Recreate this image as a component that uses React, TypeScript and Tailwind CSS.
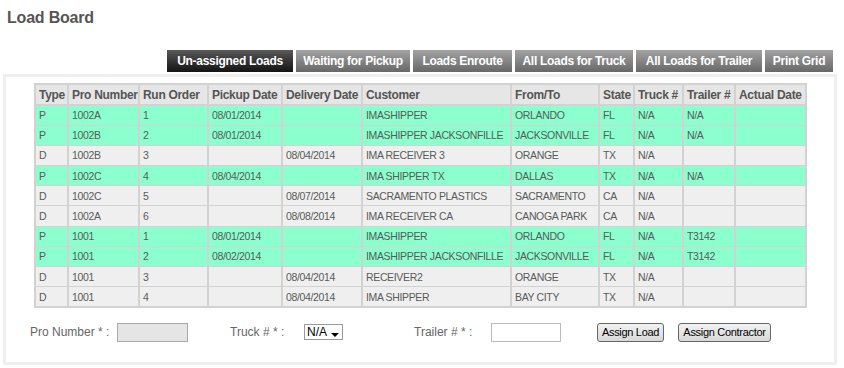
const cols = [
  { label: "Type", w: "w-[33px]" },
  { label: "Pro Number", w: "w-[71px]" },
  { label: "Run Order", w: "w-[69px]" },
  { label: "Pickup Date", w: "w-[74px]" },
  { label: "Delivery Date", w: "w-[80px]" },
  { label: "Customer", w: "w-[149px]" },
  { label: "From/To", w: "w-[88px]" },
  { label: "State", w: "w-[35px]" },
  { label: "Truck #", w: "w-[49px]" },
  { label: "Trailer #", w: "w-[52px]" },
  { label: "Actual Date", w: "w-[71px]" },
];

// P = pickup rows (green), D = delivery rows (gray)
const rows = [
  ["P", "1002A", "1", "08/01/2014", "", "IMASHIPPER", "ORLANDO", "FL", "N/A", "N/A", ""],
  ["P", "1002B", "2", "08/01/2014", "", "IMASHIPPER JACKSONFILLE", "JACKSONVILLE", "FL", "N/A", "N/A", ""],
  ["D", "1002B", "3", "", "08/04/2014", "IMA RECEIVER 3", "ORANGE", "TX", "N/A", "", ""],
  ["P", "1002C", "4", "08/04/2014", "", "IMA SHIPPER TX", "DALLAS", "TX", "N/A", "N/A", ""],
  ["D", "1002C", "5", "", "08/07/2014", "SACRAMENTO PLASTICS", "SACRAMENTO", "CA", "N/A", "", ""],
  ["D", "1002A", "6", "", "08/08/2014", "IMA RECEIVER CA", "CANOGA PARK", "CA", "N/A", "", ""],
  ["P", "1001", "1", "08/01/2014", "", "IMASHIPPER", "ORLANDO", "FL", "N/A", "T3142", ""],
  ["P", "1001", "2", "08/02/2014", "", "IMASHIPPER JACKSONFILLE", "JACKSONVILLE", "FL", "N/A", "T3142", ""],
  ["D", "1001", "3", "", "08/04/2014", "RECEIVER2", "ORANGE", "TX", "N/A", "", ""],
  ["D", "1001", "4", "", "08/04/2014", "IMA SHIPPER", "BAY CITY", "TX", "N/A", "", ""],
];

const tabs = [
  { label: "Un-assigned Loads", active: true, w: "w-[126px]" },
  { label: "Waiting for Pickup", w: "w-[114px]" },
  { label: "Loads Enroute", w: "w-[99px]" },
  { label: "All Loads for Truck", w: "w-[118px]" },
  { label: "All Loads for Trailer", w: "w-[126px]" },
  { label: "Print Grid", w: "w-[68px]" },
];

export default function App() {
  return (
    <div className="w-[844px] h-[368px] bg-white font-['Liberation_Sans',Arial,sans-serif] text-[#555]">
      <h1 className="pl-[7px] pt-[8px] text-[16px] font-bold leading-[19px] text-[#555] tracking-[-0.2px]">Load Board</h1>

      {/* Tabs */}
      <div className="flex justify-end gap-[3px] pr-[11px] mt-[23px]">
        {tabs.map((t) => (
          <div
            key={t.label}
            className={`${t.w} h-[22px] flex items-center justify-center text-[12px] font-bold text-white tracking-[-0.3px] ${
              t.active
                ? "bg-gradient-to-b from-[#5a5a5a] to-[#141414]"
                : "bg-gradient-to-b from-[#a3a3a3] to-[#686868]"
            }`}
          >
            {t.label}
          </div>
        ))}
      </div>

      {/* Panel */}
      <div className="mt-[2px] mx-[3px] w-[834px] h-[291px] border-[3px] border-[#efefef] pt-[6px] pl-[28px]">
        <table className="table-fixed w-[771px] border-collapse text-[10.5px] leading-[14px] tracking-[-0.35px]">
          <thead>
            <tr className="bg-[#e6e6e6] h-[21px]">
              {cols.map((c) => (
                <th
                  key={c.label}
                  className={`${c.w} border-2 border-[#d2d2d2] px-[3px] text-left text-[12px] font-bold text-[#555] tracking-[-0.3px] whitespace-nowrap overflow-hidden`}
                >
                  {c.label}
                </th>
              ))}
            </tr>
          </thead>
          <tbody>
            {rows.map((r, i) => (
              <tr key={i} className={`h-[20.2px] ${r[0] === "P" ? "bg-[#8cffcf]" : "bg-[#efefef]"}`}>
                {r.map((cell, j) => (
                  <td
                    key={j}
                    className={`border-x-2 border-y border-[#d2d2d2] px-[3px] whitespace-nowrap overflow-hidden text-[#5a5a5a] ${
                      i === rows.length - 1 ? "border-b-2" : ""
                    }`}
                  >
                    {cell}
                  </td>
                ))}
              </tr>
            ))}
          </tbody>
        </table>

        {/* Assign form */}
        <div className="flex items-center mt-[15px] text-[12px] text-[#666]">
          <span className="ml-[-4px] w-[87px]">Pro Number * :</span>
          <div className="w-[71px] h-[19px] bg-[#e5e5e5] border border-[#aaa]" />
          <span className="ml-[42px] w-[74px]">Truck # * :</span>
          <div className="flex items-center h-[16px] border border-[#999] bg-white px-[2px] text-black text-[12px]">
            N/A
            <svg width="10" height="6" viewBox="0 0 10 6" className="ml-[3px] mt-[5px]">
              <path d="M1 1h8L5 5z" fill="#000" />
            </svg>
          </div>
          <span className="ml-[71px] w-[77px]">Trailer # * :</span>
          <div className="w-[70px] h-[19px] bg-white border border-[#bbb]" />
          <button className="ml-[36px] h-[19px] w-[67px] rounded-[3px] border border-[#666] bg-gradient-to-b from-[#f2f2f2] to-[#d8d8d8] text-[11px] tracking-[-0.3px] text-black leading-none">
            Assign Load
          </button>
          <button className="ml-[14px] h-[19px] w-[93px] rounded-[3px] border border-[#666] bg-gradient-to-b from-[#f2f2f2] to-[#d8d8d8] text-[11px] tracking-[-0.3px] text-black leading-none">
            Assign Contractor
          </button>
        </div>
      </div>
    </div>
  );
}
